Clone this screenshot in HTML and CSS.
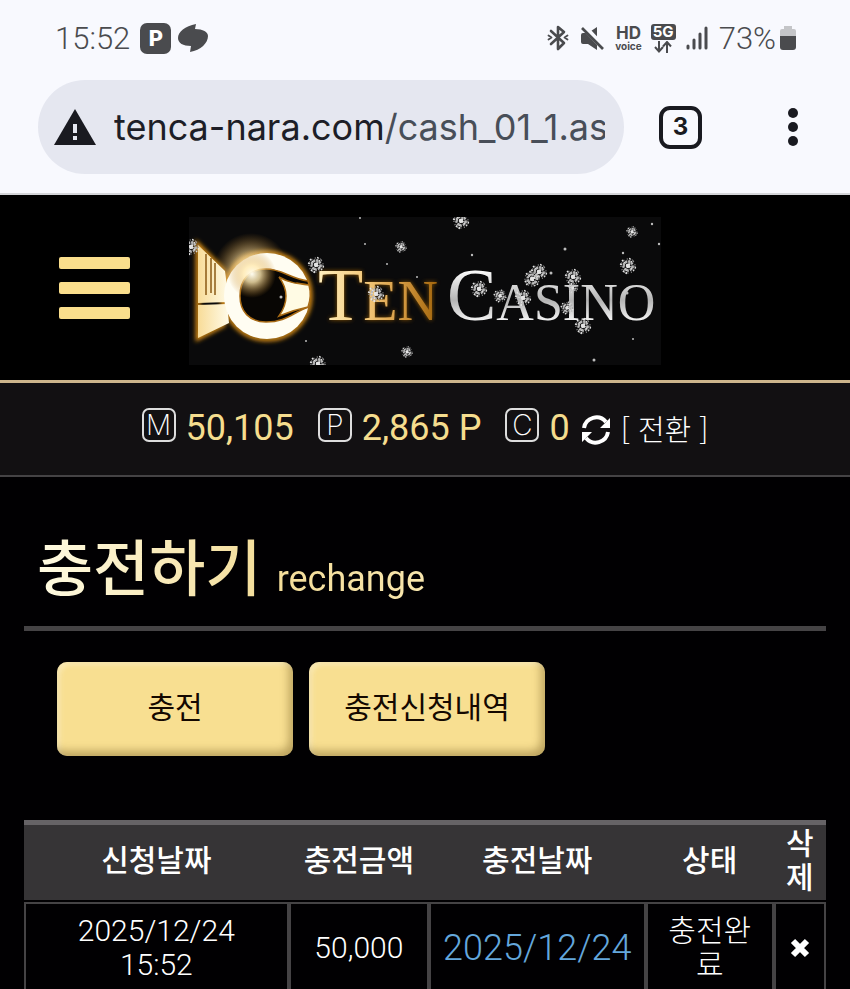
FILE: index.html
```
<!DOCTYPE html>
<html lang="ko">
<head>
    <meta charset="UTF-8">
    <meta name="viewport" content="width=device-width, initial-scale=1.0">
    <title>TEN CASINO - 충전하기</title>
    <link rel="stylesheet" href="styles.css">
</head>
<body>

    <div class="browser">
        <div class="status">
            <span class="clock">15:52</span>
            <span class="p-badge">P</span>
            <svg class="swirl" width="32" height="30" viewBox="0 0 32 30">
                <path fill="#4a4b4e" d="M19 1 C8 3 1 9 1 15 C1 20 6 23 14 23 L13 29 C24 27 31 20 31 13 C31 9 26 6 18 6Z"/>
            </svg>
            <div class="status-right">
                <svg class="i-bt" width="22" height="26" viewBox="0 0 22 26" fill="none" stroke="#4a4b4e" stroke-width="2.6" stroke-linejoin="round" stroke-linecap="round">
                    <path d="M4 6 L17 18 L11 24 V2 L17 7 L4 19"/>
                    <path d="M1.5 10.5 L4.5 12.5 L1.5 14.5 M20.5 10.5 L17.5 12.5 L20.5 14.5" stroke-width="1.8"/>
                </svg>
                <svg class="i-mute" width="24" height="25" viewBox="0 0 24 25">
                    <path fill="#4a4b4e" d="M1 9 Q1 7 3 7 H8 L17 1 V24 L8 18 H3 Q1 18 1 16Z"/>
                    <path d="M4 1 L24 22" stroke="#f8f9fe" stroke-width="6"/>
                    <path d="M2 2 L23 23" stroke="#4a4b4e" stroke-width="2.6"/>
                </svg>
                <span class="hd"><b>HD</b><small>voice</small></span>
                <span class="net"><b>5G</b>
                    <svg width="20" height="12" viewBox="0 0 20 12" fill="none" stroke="#4a4b4e" stroke-width="2">
                        <path d="M6 0 V10 M2 6 L6 10.500 L10 6 M14 12 V1 M10 5.500 L14 1 L18 5.500"/>
                    </svg>
                </span>
                <svg class="i-signal" width="22" height="24" viewBox="0 0 22 24" stroke="#4a4b4e" stroke-width="3" stroke-linecap="round">
                    <path d="M2 20 V22 M8 14 V22 M14 8 V22 M20 2 V22"/>
                </svg>
                <span class="percent">73%</span>
                <svg class="i-battery" width="18" height="26" viewBox="0 0 18 26">
                    <path fill="#c4c5c8" d="M5 1 H13 V4 H15 Q17 4 17 6 V12 H1 V6 Q1 4 3 4 H5Z"/>
                    <path fill="#4a4b4e" d="M1 11 H17 V22 Q17 25 14 25 H4 Q1 25 1 22Z"/>
                </svg>
            </div>
        </div>

        <div class="toolbar">
            <div class="address">
                <svg width="44" height="38" viewBox="0 0 44 38">
                    <path fill="#191a20" d="M22 1 L43 37 H1Z"/>
                    <path fill="#e5e7f0" d="M20 16 H24 V25 H20Z M20 28 H24 V32 H20Z"/>
                </svg>
                <div class="url">tenca-nara.com<span>/cash_01_1.asp</span></div>
            </div>
            <button class="tabs" type="button">3</button>
            <button class="more" type="button" aria-label="메뉴"><i></i><i></i><i></i></button>
        </div>
    </div>

    <header class="header">
        <button class="menu" type="button" aria-label="전체메뉴"><i></i><i></i><i></i></button>
        <a href="#" class="logo" aria-label="TEN CASINO">
            <svg width="472" height="148" viewBox="0 0 472 148">
                <defs>
                    <linearGradient id="goldText" gradientUnits="userSpaceOnUse" x1="128" y1="0" x2="248" y2="0">
                        <stop offset="0" stop-color="#fff0c0"/>
                        <stop offset="0.4" stop-color="#f5ca7c"/>
                        <stop offset="0.7" stop-color="#d59a42"/>
                        <stop offset="1" stop-color="#a3660c"/>
                    </linearGradient>
                    <linearGradient id="silver" gradientUnits="userSpaceOnUse" x1="0" y1="52" x2="0" y2="104">
                        <stop offset="0" stop-color="#ffffff"/>
                        <stop offset="0.6" stop-color="#b4b4b4"/>
                        <stop offset="1" stop-color="#f4f4f4"/>
                    </linearGradient>
                    <linearGradient id="fin" x1="0" y1="0" x2="1" y2="0">
                        <stop offset="0" stop-color="#f8dc98"/>
                        <stop offset="1" stop-color="#fffbe8"/>
                    </linearGradient>
                    <radialGradient id="flare">
                        <stop offset="0" stop-color="#fffdf0"/>
                        <stop offset="0.35" stop-color="#ffe9b0" stop-opacity="0.8"/>
                        <stop offset="1" stop-color="#c08020" stop-opacity="0"/>
                    </radialGradient>
                    <filter id="glow" x="-20%" y="-20%" width="140%" height="140%">
                        <feGaussianBlur stdDeviation="2"/>
                    </filter>
                    <g id="snow" fill="none" stroke="#e4e4e4">
                        <circle r="2" fill="#ddd" stroke="none"/>
                        <path stroke-width="1.6" stroke-dasharray="2 1" d="M-8 -2 L8 2 M-2 8 L2 -8 M-6 -6 L6 5 M-5 6 L5 -6"/>
                        <circle r="4.500" stroke-width="2.500" stroke-dasharray="2 1" stroke="#b8b8b8"/>
                        <circle r="7" stroke-width="1.300" stroke-dasharray="1 2.500" stroke="#999"/>
                    </g>
                </defs>
                <rect width="472" height="148" fill="#0a0a0b"/>

                <g filter="url(#glow)" fill="none" stroke="#d48a18" stroke-width="5">
                    <circle cx="78" cy="79" r="43"/>
                    <path d="M9 28 L34 53 V108 L9 121Z"/>
                </g>
                <circle cx="62" cy="54" r="38" fill="url(#flare)"/>
                <path fill="url(#fin)" d="M9 28 L36 54 L40 85 L9 86Z M9 88 L38 87 L40 106 L9 121Z"/>
                <path stroke="#8a5a14" stroke-width="1.500" d="M17 37 V78 M22 41 V76 M26 46 V78"/>
                <circle cx="78" cy="79" r="43" fill="#fffdf2"/>
                <path fill="#080604" stroke="#a86a14" stroke-width="1.500" d="M77 52 C93 52 100 61 119 64 L120 68 L108 66 L104 93 L120 90 C104 95 98 105 77 105 C60 105 51 94 51 79 C51 63 60 52 77 52Z"/>
                <path fill="#fffbe4" stroke="#a86a14" stroke-width="1.500" d="M90 60 C100 66 110 67 120 68 Q123 79 119 90 Q104 93 90 99 Q104 79 90 60Z"/>
                <circle cx="63" cy="57" r="24" fill="url(#flare)"/>

                <g font-family="'Liberation Serif', serif">
                    <g filter="url(#glow)" fill="#b06c10" opacity="0.8">
                        <text x="129" y="103" font-size="74">T<tspan font-size="56">EN</tspan></text>
                    </g>
                    <text x="129" y="103" font-size="74" fill="url(#goldText)">T<tspan font-size="56">EN</tspan></text>
                    <text x="258" y="103" font-size="74" fill="url(#silver)">C<tspan font-size="52">ASINO</tspan></text>
                </g>

                <use href="#snow" x="2" y="30"/>
                <use href="#snow" x="127" y="48"/>
                <use href="#snow" x="187" y="77"/>
                <use href="#snow" transform="translate(212 30) scale(0.7)"/>
                <use href="#snow" transform="translate(218 135) scale(0.7)"/>
                <use href="#snow" x="129" y="147"/>
                <use href="#snow" x="272" y="4"/>
                <use href="#snow" x="290" y="72"/>
                <use href="#snow" transform="translate(311 79) scale(0.8)"/>
                <use href="#snow" x="334" y="81"/>
                <use href="#snow" x="350" y="55"/>
                <use href="#snow" transform="translate(343 62) rotate(30)"/>
                <use href="#snow" x="384" y="60"/>
                <use href="#snow" transform="translate(384 71) scale(0.6)"/>
                <use href="#snow" transform="translate(378 91) scale(0.8)"/>
                <use href="#snow" x="394" y="109"/>
                <use href="#snow" transform="translate(443 15) scale(0.7)"/>
                <use href="#snow" x="439" y="49"/>
                <g fill="#bbb">
                    <circle cx="171" cy="1" r="1"/><circle cx="176" cy="27" r="1"/><circle cx="198" cy="47" r="1"/>
                    <circle cx="228" cy="60" r="1"/><circle cx="92" cy="80" r="1.500"/><circle cx="117" cy="124" r="1"/>
                    <circle cx="283" cy="38" r="1.200"/><circle cx="376" cy="32" r="1.500"/><circle cx="362" cy="56" r="1.500"/>
                    <circle cx="463" cy="7" r="1.200"/><circle cx="470" cy="27" r="1.200"/><circle cx="434" cy="36" r="1.200"/>
                    <circle cx="438" cy="76" r="1.500"/><circle cx="444" cy="122" r="1"/><circle cx="405" cy="143" r="1.500"/>
                </g>
            </svg>
        </a>
    </header>

    <div class="wallet">
        <span class="tag">M</span><span class="amount">50,105</span>
        <span class="tag">P</span><span class="amount">2,865 P</span>
        <span class="tag">C</span><span class="amount">0</span>
        <button class="convert" type="button">
            <svg width="30" height="30" viewBox="0 0 30 30">
                <path d="M3 13 A12.500 12.500 0 0 1 25 7 M27 17 A12.500 12.500 0 0 1 5 23" fill="none" stroke="#fff" stroke-width="4"/>
                <path fill="#fff" d="M29 3 V13 H19Z M1 27 V17 H11Z"/>
            </svg>
            [ 전환 ]
        </button>
    </div>

    <main class="content">
        <h1 class="title"><span>충전하기 <small>rechange</small></span></h1>

        <div class="buttons">
            <button type="button">충전</button>
            <button type="button">충전신청내역</button>
        </div>

        <table class="list">
            <colgroup>
                <col class="col-request">
                <col class="col-amount">
                <col class="col-date">
                <col class="col-state">
                <col class="col-delete">
            </colgroup>
            <thead>
                <tr>
                    <th>신청날짜</th>
                    <th>충전금액</th>
                    <th>충전날짜</th>
                    <th>상태</th>
                    <th>삭제</th>
                </tr>
            </thead>
            <tbody>
                <tr>
                    <td>2025/12/24 15:52</td>
                    <td>50,000</td>
                    <td class="date">2025/12/24</td>
                    <td>충전완료</td>
                    <td>
                        <button class="delete" type="button" aria-label="삭제">
                            <svg width="20" height="20" viewBox="0 0 20 20">
                                <path d="M3 3 L17 17 M17 3 L3 17" stroke="#fff" stroke-width="6"/>
                            </svg>
                        </button>
                    </td>
                </tr>
            </tbody>
        </table>
    </main>

</body>
</html>
```
FILE: styles.css
```
* {
    box-sizing: border-box;
}
body {
    margin: 0;
    background: #010002;
    color: #fff;
    font-family: Roboto, "Noto Sans CJK KR", sans-serif;
}
button {
    padding: 0;
    border: none;
    background: none;
    color: inherit;
    font-family: inherit;
    cursor: pointer;
}

/* phone status bar + address bar */
.browser {
    height: 195px;
    background: #f8f9fe;
    border-bottom: 2px solid #d4d5d9;
}
.status {
    display: flex;
    align-items: center;
    height: 80px;
    padding: 0 53px 4px 55px;
    color: #4a4b4e;
    font-size: 31px;
    font-weight: 300;
}
.p-badge {
    width: 31px;
    height: 31px;
    margin: 0 6px 0 10px;
    border-radius: 7px;
    background: #4a4b4e;
    color: #fff;
    font: 900 22px/31px Roboto, sans-serif;
    text-align: center;
}
.status-right {
    display: flex;
    align-items: center;
    margin-left: auto;
}
.i-mute {
    margin: 0 11px;
}
.hd b, .hd small {
    display: block;
    text-align: center;
}
.hd b {
    font: 700 17px/16px Inter, sans-serif;
}
.hd small {
    font: 700 10px/10px Inter, sans-serif;
}
.net {
    width: 25px;
    margin: 0 10px 0 9px;
    text-align: center;
}
.net b {
    display: block;
    border-radius: 3px;
    background: #4a4b4e;
    color: #fff;
    font: 700 15px/16px Inter, sans-serif;
}
.net svg {
    display: block;
    margin: 1px auto 0;
}
.percent {
    margin: 0 3px 0 11px;
}
.toolbar {
    display: flex;
    align-items: center;
    padding: 0 52px 0 38px;
}
.address {
    display: flex;
    flex: 1;
    align-items: center;
    min-width: 0;
    height: 94px;
    padding: 0 19px 0 15px;
    border-radius: 47px;
    background: #e5e7f0;
}
.address svg {
    flex: none;
    margin-right: 17px;
}
.url {
    overflow: hidden;
    color: #1d1e27;
    font: 400 36px/56px Inter, sans-serif;
    white-space: nowrap;
}
.url span {
    color: #484e58;
}
.tabs {
    width: 43px;
    height: 43px;
    margin: 0 86px 0 35px;
    border: 4px solid #191a20;
    border-radius: 11px;
    color: #191a20;
    font: 700 24px/34px Inter, sans-serif;
}
.more i {
    display: block;
    width: 10px;
    height: 10px;
    margin: 4px 0;
    border-radius: 50%;
    background: #191a20;
}

/* site header */
.header {
    display: grid;
    grid-template-columns: 1fr auto 1fr;
    align-items: center;
    height: 188px;
    border-bottom: 3px solid #cdb58c;
    background: #000;
}
.menu {
    justify-self: start;
    margin-left: 59px;
}
.menu i {
    display: block;
    width: 71px;
    height: 12px;
    margin-bottom: 13px;
    border-radius: 2px;
    background: #fade8c;
}
.menu i:last-child {
    margin-bottom: 0;
}
.logo {
    padding-top: 6px;
}
.logo svg {
    display: block;
}

.wallet {
    display: flex;
    align-items: center;
    justify-content: center;
    height: 94px;
    padding-bottom: 2px;
    border-bottom: 2px solid #454345;
    background: #121012;
}
.tag {
    width: 34px;
    height: 34px;
    margin: 0 10px 6px 24px;
    border: 2px solid #ddd;
    border-radius: 7px;
    font: 200 28px/30px Inter, sans-serif;
    text-align: center;
}
.tag:first-child {
    margin-left: 0;
}
.amount {
    color: #f5dd8e;
    font-size: 36px;
    line-height: 44px;
}
.convert {
    display: flex;
    align-items: center;
    margin-left: 11px;
    font-family: "Noto Sans CJK KR", sans-serif;
    font-size: 29px;
    font-weight: 300;
    line-height: 40px;
}
.convert svg {
    margin: 4px 10px 0 0;
}

.content {
    padding: 0 24px;
}
.title {
    margin: 0;
    height: 154px;
    padding: 48px 13px 0;
    border-bottom: 5px solid #454345;
    font-size: 61px;
    font-weight: 500;
    line-height: 90px;
}
.title span {
    background: linear-gradient(to right, #fffbe2, #f3dc98 60%, #f8e6ae);
    -webkit-background-clip: text;
    background-clip: text;
    color: transparent;
}
.title small {
    font-size: 36px;
    font-weight: 400;
}
.buttons {
    display: flex;
    gap: 16px;
    padding: 31px 33px 64px;
}
.buttons button {
    width: 236px;
    height: 94px;
    padding-bottom: 8px;
    border-radius: 10px;
    background: #f8df91;
    box-shadow: inset -4px -5px 8px rgba(100, 75, 20, 0.4), inset 3px 3px 5px rgba(255, 245, 210, 0.6);
    color: #140800;
    font-size: 30px;
}

.list {
    width: 100%;
    border-collapse: separate;
    border-spacing: 0;
    table-layout: fixed;
    border-top: 5px solid #666366;
    font-size: 30px;
    line-height: 34px;
    text-align: center;
}
.col-request { width: 33%; }
.col-amount { width: 17.5%; }
.col-date { width: 27%; }
.col-state { width: 16%; }
.col-delete { width: 6.5%; }
.list th {
    height: 77px;
    padding: 0 10px 4px;
    border-bottom: 2px solid #010002;
    background: #363436;
    font-weight: 500;
}
.list td {
    height: 92px;
    padding: 0 10px;
    border: 2px solid #454345;
    font-weight: 300;
}
.list td:first-child {
    padding: 0 40px;
}
.list .date {
    padding: 0;
    color: #64a7dc;
    font-size: 36px;
}
.list td:last-child, .list th:last-child {
    padding-right: 0;
    padding-left: 0;
}
.list th:last-child {
    padding-right: 11px;
    padding-left: 11px;
}
.delete {
    display: block;
    margin: 0 auto;
}
.delete svg {
    display: block;
}
```
